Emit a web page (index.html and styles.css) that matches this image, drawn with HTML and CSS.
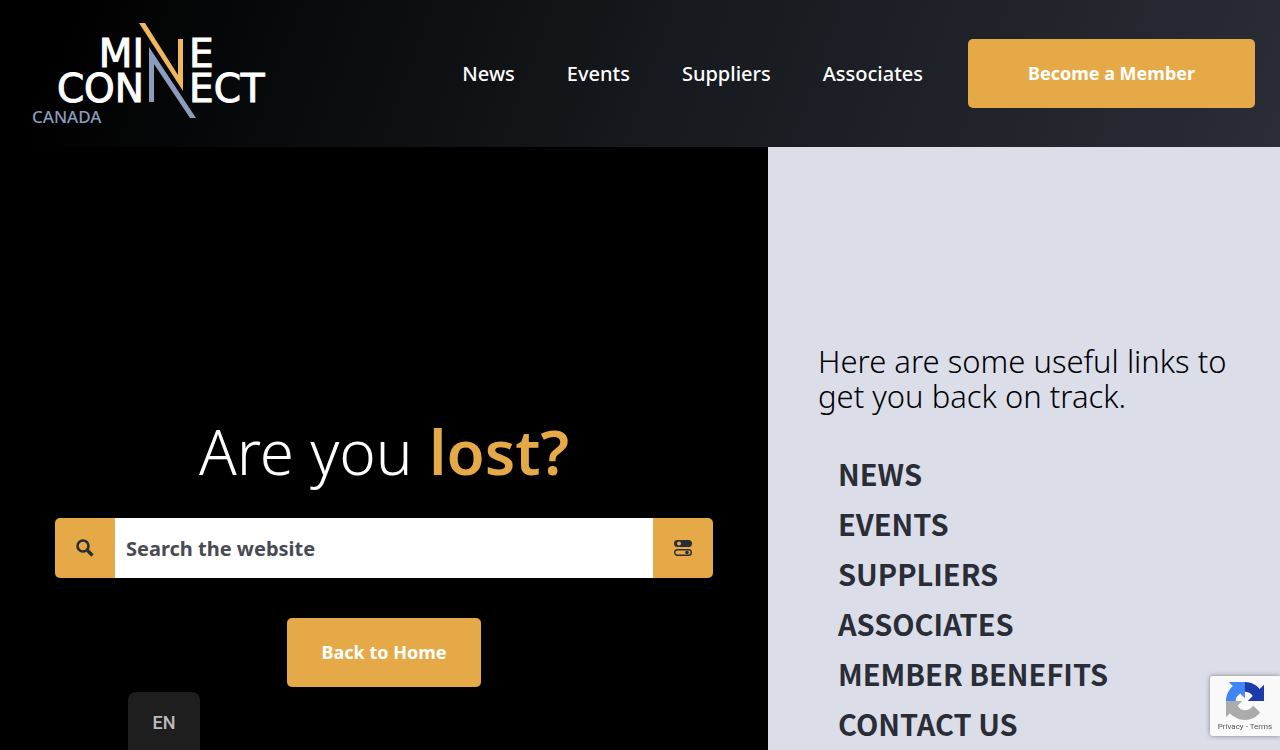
FILE: index.html
```html
<!DOCTYPE html>
<html lang="en">

<head>
    <meta charset="utf-8">
    <meta name="viewport" content="width=device-width, initial-scale=1">
    <title>Mine Connect Canada</title>
    <link rel="stylesheet" href="styles.css">
</head>

<body>
    <header class="header">
        <a class="logo" href="#">
            <svg viewBox="0 0 262 108" width="262" height="108">
                <g class="logo-word">
                    <text x="112" y="44" text-anchor="end">MI</text>
                    <text x="157" y="44">E</text>
                    <text x="112" y="79" text-anchor="end">CON</text>
                    <text x="157" y="79">ECT</text>
                </g>
                <path fill="#f0b85c" d="M107 0h6l33 52V16h5v52z" />
                <path fill="#8c9cbc" d="M117 24l47 71h-6L122 41v38h-5z" />
                <text class="logo-sub" x="0" y="100">CANADA</text>
            </svg>
        </a>
        <nav class="nav">
            <a href="#">News</a>
            <a href="#">Events</a>
            <a href="#">Suppliers</a>
            <a href="#">Associates</a>
        </nav>
        <a class="btn btn-member" href="#">Become a Member</a>
    </header>

    <main class="main">
        <section class="lost">
            <h1>Are you <strong>lost?</strong></h1>
            <form class="search">
                <button type="submit" aria-label="Search">
                    <svg viewBox="0 0 18 18" width="18" height="18" fill="none" stroke="#2a2d36">
                        <circle cx="7" cy="7" r="5.5" stroke-width="2.6" />
                        <path d="M11.5 11.5l5 5" stroke-width="3.4" />
                    </svg>
                </button>
                <input type="search" name="s" placeholder="Search the website" aria-label="Search the website">
                <button type="button" aria-label="Filters">
                    <svg viewBox="0 0 18 18" width="18" height="18">
                        <rect x="0" y="1" width="18" height="7" rx="3.5" fill="#2a2d36" />
                        <circle cx="5" cy="4.5" r="2" fill="#e5aa47" />
                        <rect x="0.7" y="10.7" width="16.6" height="5.6" rx="2.8" fill="none" stroke="#2a2d36" stroke-width="1.4" />
                        <circle cx="13" cy="13.5" r="1.8" fill="#2a2d36" />
                    </svg>
                </button>
            </form>
            <a class="btn" href="#">Back to Home</a>
        </section>

        <section class="links">
            <h2>Here are some useful links to get you back on track.</h2>
            <ul>
                <li><a href="#">NEWS</a></li>
                <li><a href="#">EVENTS</a></li>
                <li><a href="#">SUPPLIERS</a></li>
                <li><a href="#">ASSOCIATES</a></li>
                <li><a href="#">MEMBER BENEFITS</a></li>
                <li><a href="#">CONTACT US</a></li>
            </ul>
        </section>
    </main>

    <button class="lang" type="button">EN</button>

    <div class="captcha">
        <svg viewBox="0 0 64 64" width="38" height="38">
            <path fill="#1c3aa9" d="M64 31.955l-.033-1.37V4.687l-7.16 7.16C50.948 4.674 42.033.093 32.05.093c-10.4 0-19.622 4.96-25.458 12.64l11.736 11.86a15.55 15.55 0 0 1 4.754-5.334c2.05-1.6 4.952-2.906 8.968-2.906.485 0 .86.057 1.135.163 4.976.393 9.288 3.14 11.828 7.124l-8.307 8.307L64 31.953" />
            <path fill="#4285f4" d="M31.862.094l-1.37.033H4.594l7.16 7.16C4.58 13.147 0 22.06 0 32.046c0 10.4 4.96 19.622 12.64 25.458L24.5 45.768a15.55 15.55 0 0 1-5.334-4.754c-1.6-2.05-2.906-4.952-2.906-8.968 0-.485.057-.86.163-1.135.393-4.976 3.14-9.288 7.124-11.828l8.307 8.307L31.86.095" />
            <path fill="#ababab" d="M.001 32.045l.033 1.37v25.898l7.16-7.16c5.86 7.173 14.774 11.754 24.76 11.754 10.4 0 19.622-4.96 25.458-12.64l-11.736-11.86a15.55 15.55 0 0 1-4.754 5.334c-2.05 1.6-4.952 2.906-8.968 2.906-.485 0-.86-.057-1.135-.163-4.976-.393-9.288-3.14-11.828-7.124l8.307-8.307c-10.522.04-22.4.066-27.295-.005" />
        </svg>
        <p><a href="#">Privacy</a> - <a href="#">Terms</a></p>
    </div>
</body>

</html>
```

FILE: styles.css
```css
* {
    box-sizing: border-box;
}

body {
    margin: 0;
    min-height: 100vh;
    display: flex;
    flex-direction: column;
    font-family: "Noto Sans", "Open Sans", sans-serif;
    background: #000;
}

a {
    color: inherit;
    text-decoration: none;
}

.header {
    display: flex;
    align-items: center;
    height: 147px;
    padding: 0 25px 0 32px;
    background: linear-gradient(110deg, #000 5%, #15181c 50%, #2a2d36);
    color: #fff;
}

.logo {
    padding-top: 6px;
}

.logo svg {
    display: block;
}

.logo-word {
    font-family: "DejaVu Sans", sans-serif;
    font-size: 39px;
    fill: #fff;
    stroke: #fff;
    stroke-width: 1px;
}

.logo-sub {
    font-size: 17px;
    font-weight: 500;
    fill: #8c9cbc;
}

.nav {
    display: flex;
    gap: 52px;
    margin-left: auto;
    margin-right: 45px;
    font-size: 20px;
    font-weight: 500;
}

.btn {
    display: flex;
    align-items: center;
    justify-content: center;
    height: 69px;
    padding: 0 35px 2px;
    border-radius: 5px;
    background: #e5aa47;
    color: #fff;
    font-size: 18px;
    font-weight: 700;
}

.btn-member {
    width: 287px;
}

.main {
    flex: 1;
    display: grid;
    grid-template-columns: 3fr 2fr;
}

.lost {
    display: flex;
    flex-direction: column;
    align-items: center;
    padding: 264px 55px 0;
    background: #000;
}

.lost h1 {
    margin: 0 0 27px;
    color: #fff;
    font-size: 62px;
    font-weight: 300;
    line-height: 80px;
}

.lost strong {
    color: #e5aa47;
    font-weight: 600;
}

.search {
    display: flex;
    width: 100%;
    height: 60px;
    margin-bottom: 40px;
    border-radius: 5px;
    overflow: hidden;
}

.search button {
    display: flex;
    align-items: center;
    justify-content: center;
    width: 60px;
    padding: 0;
    border: 0;
    background: #e5aa47;
}

.search input {
    flex: 1;
    min-width: 0;
    padding: 0 11px;
    border: 0;
    background: #fff;
    font: 700 20px "Noto Sans", "Open Sans", sans-serif;
}

.search input::placeholder {
    color: #484b53;
    opacity: 1;
}

.links {
    padding: 197px 50px 0;
    background: #dbdde9;
}

.links h2 {
    margin: 0 0 34px;
    color: #000;
    font-size: 31px;
    font-weight: 300;
    line-height: 35px;
}

.links ul {
    margin: 0;
    padding: 0 0 0 20px;
    list-style: none;
}

.links li {
    color: #2a2d36;
    font-family: "Noto Sans CJK JP", sans-serif;
    font-size: 29px;
    font-weight: 700;
    line-height: 50px;
}

.lang {
    position: fixed;
    left: 10%;
    bottom: 0;
    width: 72px;
    height: 58px;
    padding-top: 3px;
    border: 0;
    border-radius: 8px 8px 0 0;
    background: #1e1e1e;
    color: #bcbcbc;
    font: 500 18px Roboto, sans-serif;
}

.captcha {
    position: fixed;
    right: 0;
    bottom: 14px;
    width: 70px;
    height: 60px;
    padding-top: 6px;
    border-radius: 3px 0 0 3px;
    background: #f9f9f9;
    box-shadow: 0 0 5px #808080;
    text-align: center;
}

.captcha svg {
    display: block;
    margin: 0 auto;
}

.captcha p {
    margin: 0;
    color: #555;
    font: 8px/14px Roboto, sans-serif;
}
```
